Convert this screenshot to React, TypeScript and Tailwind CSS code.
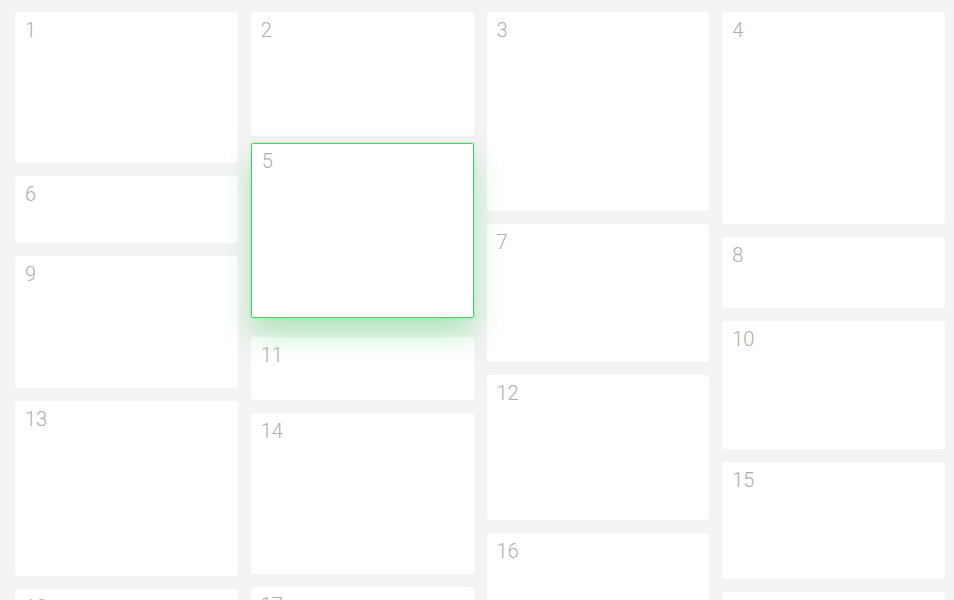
const columns: { n: number; h: number; active?: boolean }[][] = [
  [
    { n: 1, h: 151 },
    { n: 6, h: 67 },
    { n: 9, h: 132 },
    { n: 13, h: 175 },
    { n: 18, h: 120 },
  ],
  [
    { n: 2, h: 124 },
    { n: 5, h: 175, active: true },
    { n: 11, h: 63 },
    { n: 14, h: 161 },
    { n: 17, h: 120 },
  ],
  [
    { n: 3, h: 199 },
    { n: 7, h: 138 },
    { n: 12, h: 145 },
    { n: 16, h: 140 },
  ],
  [
    { n: 4, h: 212 },
    { n: 8, h: 71 },
    { n: 10, h: 128 },
    { n: 15, h: 117 },
    { n: 19, h: 120 },
  ],
];

const App = () => {
  return (
    <div className="h-[600px] overflow-hidden bg-[#f3f3f3] pt-[12px] pl-[15px] pr-[9px]" style={{ fontFamily: 'Roboto, "Liberation Sans", sans-serif' }}>
      <div className="grid grid-cols-4 gap-x-[13px]">
        {columns.map((col, i) => (
          <div key={i} className="flex flex-col gap-[13px]">
            {col.map((card) => (
              <div
                key={card.n}
                style={{ height: card.h }}
                className={
                  card.active
                    ? 'relative z-10 -mt-[6px] mb-[6px] rounded-[2px] border border-solid border-[#3ddc5f] bg-white px-[10px] pt-[2px] shadow-[0_16px_28px_rgba(70,210,100,0.38),0_0_2px_rgba(70,210,100,0.5)]'
                    : 'rounded-[3px] bg-white px-[10px] pt-[3px]'
                }
              >
                <span className="text-[20px] font-light leading-[30px] text-[#adadad]">{card.n}</span>
              </div>
            ))}
          </div>
        ))}
      </div>
    </div>
  );
};

export default App;
